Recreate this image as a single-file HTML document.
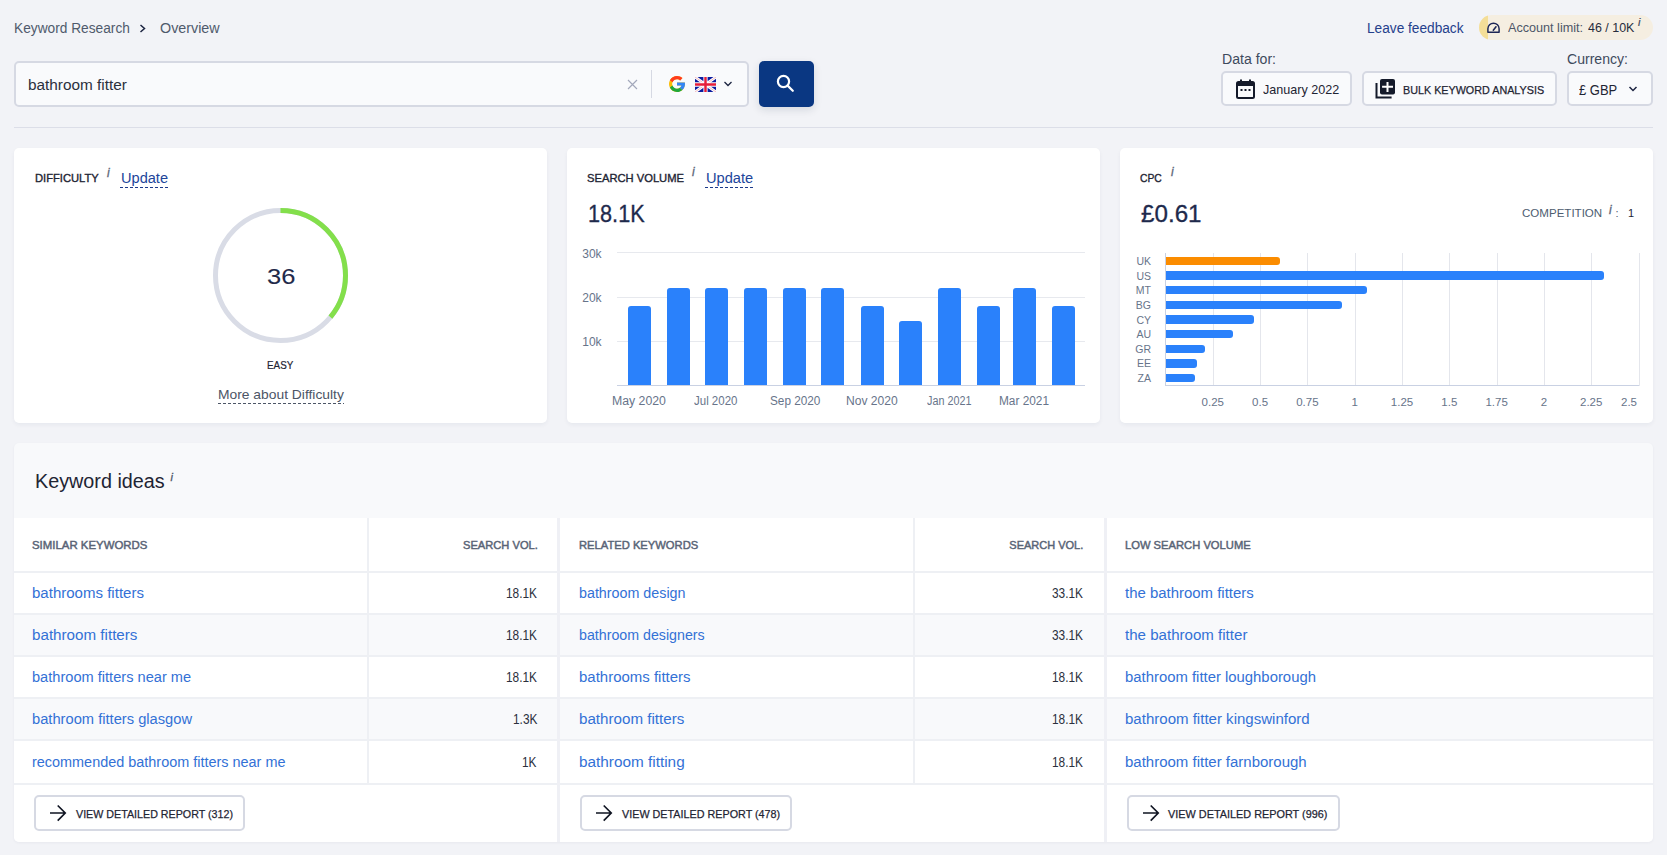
<!DOCTYPE html>
<html><head><meta charset="utf-8"><style>
*{margin:0;padding:0;box-sizing:border-box}
html,body{width:1667px;height:855px;overflow:hidden;background:#f2f3f7;font-family:"Liberation Sans",sans-serif}
.t{position:absolute;white-space:nowrap;line-height:20px;transform-origin:0 50%}
.a{position:absolute}
.card{position:absolute;background:#fff;border-radius:5px;box-shadow:0 2px 4px rgba(20,30,70,.05)}
.btn{position:absolute;border:2px solid #d6d9e3;border-radius:5px;background:#f9fafc}
.wbtn{position:absolute;border:2px solid #d6d9e3;border-radius:5px;background:#fff}
.dash{position:absolute;height:1px;background-image:linear-gradient(to right,currentColor 60%,transparent 60%);background-size:5px 1px}
</style></head>
<body>
<span class="t" style="left:14.40px;top:18.15px;font-size:14px;color:#4f5a6c;transform:scaleX(0.9797);">Keyword Research</span>
<svg class="a" style="left:139px;top:24px" width="8" height="9" viewBox="0 0 8 9"><path d="M1.5 1 L5.5 4.5 L1.5 8" fill="none" stroke="#1b2340" stroke-width="1.5"/></svg>
<span class="t" style="left:159.80px;top:18.15px;font-size:14px;color:#4f5a6c;transform:scaleX(1.0226);">Overview</span>
<div class="a" style="left:14px;top:61px;width:735px;height:46px;border:2px solid #d6d9e3;border-radius:5px;background:#f9fafc"></div>
<span class="t" style="left:28.40px;top:75.15px;font-size:14px;color:#2b303d;transform:scaleX(1.0961);">bathroom fitter</span>
<svg class="a" style="left:627px;top:79px" width="11" height="11" viewBox="0 0 11 11"><path d="M1 1L10 10M10 1L1 10" stroke="#a3a8bb" stroke-width="1.15"/></svg>
<div class="a" style="left:651px;top:70px;width:1px;height:28px;background:#d6d9e3"></div>
<svg class="a" style="left:669px;top:76px" width="16" height="16" viewBox="4 4 40 40">
<path fill="#FBBC05" d="M43.6 20.1H42V20H24v8h11.3C33.7 32.7 29.2 36 24 36c-6.6 0-12-5.4-12-12s5.4-12 12-12c3.1 0 5.8 1.2 7.9 3l5.7-5.7C34 6.1 29.3 4 24 4 13 4 4 13 4 24s9 20 20 20 20-9 20-20c0-1.3-.1-2.6-.4-3.9z"/>
<path fill="#FF3B1F" d="M6.3 14.7l6.6 4.8C14.7 15.1 19 12 24 12c3.1 0 5.8 1.2 7.9 3l5.7-5.7C34 6.1 29.3 4 24 4 16.3 4 9.7 8.3 6.3 14.7z"/>
<path fill="#1FA83C" d="M24 44c5.2 0 9.9-2 13.4-5.2l-6.2-5.2C29.2 35.1 26.7 36 24 36c-5.2 0-9.6-3.3-11.3-8l-6.5 5C9.5 39.6 16.2 44 24 44z"/>
<path fill="#3386F6" d="M43.6 20.1H42V20H24v8h11.3c-.8 2.2-2.2 4.2-4.1 5.6l6.2 5.2C37 39.2 44 34 44 24c0-1.3-.1-2.6-.4-3.9z"/>
</svg>
<svg class="a" style="left:695px;top:77px" width="21" height="15" viewBox="0 0 60 40" preserveAspectRatio="none">
<rect width="60" height="40" fill="#0b1b9f"/>
<path d="M0 0L60 40M60 0L0 40" stroke="#fff" stroke-width="8"/>
<path d="M0 0L60 40M60 0L0 40" stroke="#f0a0a8" stroke-width="2"/>
<path d="M30 0V40M0 20H60" stroke="#fff" stroke-width="12"/>
<path d="M30 0V40M0 20H60" stroke="#e51d3a" stroke-width="7"/>
</svg>
<svg class="a" style="left:723px;top:80px" width="10" height="8" viewBox="0 0 10 8"><path d="M1.5 2 L5 5.5 L8.5 2" fill="none" stroke="#1b2340" stroke-width="1.3"/></svg>
<div class="a" style="left:759px;top:61px;width:55px;height:46px;border-radius:5px;background:#0a3782;box-shadow:0 3px 8px rgba(20,30,60,.12)"></div>
<svg class="a" style="left:774px;top:72px" width="24" height="24" viewBox="0 0 24 24"><circle cx="9.5" cy="9.5" r="5.6" fill="none" stroke="#fff" stroke-width="2.2"/><path d="M13.6 13.6L18.8 18.8" stroke="#fff" stroke-width="2.2" stroke-linecap="round"/></svg>
<span class="t" style="left:1367.40px;top:18.15px;font-size:14px;color:#25408c;transform:scaleX(0.9766);">Leave feedback</span>
<div class="a" style="left:1479px;top:15px;width:174px;height:25px;border-radius:13px;background:#f5eee1;overflow:hidden"><div class="a" style="left:0;top:0;width:9px;height:25px;background:#f4de98"></div></div>
<svg class="a" style="left:1486px;top:22px" width="15" height="12" viewBox="0 0 15 12"><path d="M1.9 10.2V6.8A5.6 5.6 0 0 1 13.1 6.8V10.2Z" fill="none" stroke="#1d2757" stroke-width="1.5" stroke-linejoin="round"/><path d="M7.3 8.2L10 4.8" stroke="#1d2757" stroke-width="1.6" stroke-linecap="round"/></svg>
<span class="t" style="left:1508.00px;top:17.67px;font-size:12.5px;color:#4d5668;transform:scaleX(1.0093);">Account limit:</span>
<span class="t" style="left:1588.00px;top:17.67px;font-size:12.5px;color:#272d3d;transform:scaleX(0.9965);">46 / 10K</span>
<span class="t" style="left:1638.00px;top:11.79px;font-size:11px;color:#3b4458;font-style:italic;-webkit-text-stroke:0.2px currentColor;">i</span>
<span class="t" style="left:1222.40px;top:49.15px;font-size:14px;color:#3e4a5d;transform:scaleX(1.0058);">Data for:</span>
<div class="btn" style="left:1221px;top:71px;width:131px;height:35px"></div>
<svg class="a" style="left:1236px;top:79px" width="19" height="20" viewBox="0 0 19 20">
<rect x="1" y="3" width="17" height="16" rx="1.5" fill="none" stroke="#141a2a" stroke-width="2"/>
<rect x="1" y="3" width="17" height="4" fill="#141a2a"/>
<path d="M5 0.5V4M14 0.5V4" stroke="#141a2a" stroke-width="2"/>
<rect x="4.5" y="10" width="2" height="2" fill="#141a2a"/><rect x="8.5" y="10" width="2" height="2" fill="#141a2a"/><rect x="12.5" y="10" width="2" height="2" fill="#141a2a"/>
</svg>
<span class="t" style="left:1263.00px;top:79.62px;font-size:13.5px;color:#1e2433;transform:scaleX(0.9314);">January 2022</span>
<div class="btn" style="left:1362px;top:71px;width:195px;height:35px"></div>
<svg class="a" style="left:1375px;top:78px" width="22" height="22" viewBox="0 0 22 22">
<path d="M1.5 5V19.6H16.6" fill="none" stroke="#141a2a" stroke-width="2"/>
<rect x="5" y="1" width="15" height="15.6" rx="2" fill="#141a2a"/>
<path d="M12.5 3.9V13.9M7.1 8.8H18" stroke="#fff" stroke-width="2"/>
</svg>
<span class="t" style="left:1403.30px;top:80.01px;font-size:11.5px;color:#1e2433;transform:scaleX(0.9370);-webkit-text-stroke:0.25px currentColor;">BULK KEYWORD ANALYSIS</span>
<span class="t" style="left:1567.40px;top:49.15px;font-size:14px;color:#3e4a5d;transform:scaleX(1.0035);">Currency:</span>
<div class="btn" style="left:1567px;top:71px;width:86px;height:35px"></div>
<span class="t" style="left:1579.20px;top:80.35px;font-size:14px;color:#1e2433;transform:scaleX(0.9265);">£ GBP</span>
<svg class="a" style="left:1628px;top:85px" width="10" height="8" viewBox="0 0 10 8"><path d="M1.5 2 L5 5.5 L8.5 2" fill="none" stroke="#1b2340" stroke-width="1.5"/></svg>
<div class="a" style="left:14px;top:127px;width:1639px;height:1px;background:#dcdee8"></div>
<div class="card" style="left:14px;top:148px;width:533px;height:275px"></div>
<div class="card" style="left:567px;top:148px;width:533px;height:275px"></div>
<div class="card" style="left:1120px;top:148px;width:533px;height:275px"></div>
<span class="t" style="left:34.60px;top:168.19px;font-size:11px;color:#1e2433;transform:scaleX(1.0167);-webkit-text-stroke:0.35px currentColor;">DIFFICULTY</span>
<span class="t" style="left:107.00px;top:162.64px;font-size:12px;color:#5d6779;font-style:italic;-webkit-text-stroke:0.3px currentColor;">i</span>
<span class="t" style="left:121.00px;top:167.55px;font-size:14px;color:#21459a;transform:scaleX(1.0410);">Update</span>
<div class="dash" style="left:120px;top:187px;width:48px;color:#1c3a8a"></div>
<svg class="a" style="left:0;top:0" width="560" height="430"><circle cx="280.5" cy="275.5" r="65" fill="none" stroke="#d9dce6" stroke-width="5"/>
<circle cx="280.5" cy="275.5" r="65" fill="none" stroke="#83df4b" stroke-width="5" stroke-dasharray="147.03 408.41" transform="rotate(-90 280.5 275.5)"/></svg>
<span class="t" style="left:266.70px;top:266.50px;font-size:22.5px;color:#1f2a4a;transform:scaleX(1.1331);-webkit-text-stroke:0.1px currentColor;">36</span>
<span class="t" style="left:266.70px;top:355.19px;font-size:11px;color:#1e2433;transform:scaleX(0.8955);-webkit-text-stroke:0.2px currentColor;">EASY</span>
<span class="t" style="left:217.60px;top:385.49px;font-size:13px;color:#4c5566;transform:scaleX(1.0640);">More about Difficulty</span>
<div class="dash" style="left:218px;top:403px;width:126px;color:#4c5566"></div>
<span class="t" style="left:587.00px;top:168.19px;font-size:11px;color:#1e2433;transform:scaleX(1.0171);-webkit-text-stroke:0.35px currentColor;">SEARCH VOLUME</span>
<span class="t" style="left:692.00px;top:162.04px;font-size:12px;color:#5d6779;font-style:italic;-webkit-text-stroke:0.3px currentColor;">i</span>
<span class="t" style="left:706.00px;top:167.55px;font-size:14px;color:#21459a;transform:scaleX(1.0454);">Update</span>
<div class="dash" style="left:705px;top:187px;width:48px;color:#1c3a8a"></div>
<span class="t" style="left:587.60px;top:203.65px;font-size:23.5px;color:#1e2a4c;transform:scaleX(0.9227);-webkit-text-stroke:0.3px currentColor;">18.1K</span>
<div class="a" style="left:617px;top:252px;width:468px;height:1px;background:#e7e9ee"></div>
<div class="a" style="left:617px;top:297px;width:468px;height:1px;background:#e7e9ee"></div>
<div class="a" style="left:617px;top:341px;width:468px;height:1px;background:#e7e9ee"></div>
<div class="a" style="left:617px;top:385px;width:468px;height:1px;background:#c9d1e3"></div>
<span class="t" style="left:582.22px;top:244.24px;font-size:12px;color:#67748a;">30k</span>
<span class="t" style="left:582.22px;top:288.24px;font-size:12px;color:#67748a;">20k</span>
<span class="t" style="left:582.22px;top:332.24px;font-size:12px;color:#67748a;">10k</span>
<div class="a" style="left:628.2px;top:306px;width:22.8px;height:79.0px;background:#2a81fb;border-radius:3px 3px 0 0"></div>
<div class="a" style="left:667.1px;top:288px;width:22.8px;height:97.0px;background:#2a81fb;border-radius:3px 3px 0 0"></div>
<div class="a" style="left:705.2px;top:288px;width:22.8px;height:97.0px;background:#2a81fb;border-radius:3px 3px 0 0"></div>
<div class="a" style="left:744.0px;top:288px;width:22.8px;height:97.0px;background:#2a81fb;border-radius:3px 3px 0 0"></div>
<div class="a" style="left:783.1px;top:288px;width:22.8px;height:97.0px;background:#2a81fb;border-radius:3px 3px 0 0"></div>
<div class="a" style="left:821.1px;top:288px;width:22.8px;height:97.0px;background:#2a81fb;border-radius:3px 3px 0 0"></div>
<div class="a" style="left:861.2px;top:306px;width:22.8px;height:79.0px;background:#2a81fb;border-radius:3px 3px 0 0"></div>
<div class="a" style="left:899.1px;top:321.3px;width:22.8px;height:63.7px;background:#2a81fb;border-radius:3px 3px 0 0"></div>
<div class="a" style="left:938.0px;top:288px;width:22.8px;height:97.0px;background:#2a81fb;border-radius:3px 3px 0 0"></div>
<div class="a" style="left:977.2px;top:306px;width:22.8px;height:79.0px;background:#2a81fb;border-radius:3px 3px 0 0"></div>
<div class="a" style="left:1013.2px;top:288px;width:22.8px;height:97.0px;background:#2a81fb;border-radius:3px 3px 0 0"></div>
<div class="a" style="left:1052.0px;top:306px;width:22.8px;height:79.0px;background:#2a81fb;border-radius:3px 3px 0 0"></div>
<span class="t" style="left:611.80px;top:390.64px;font-size:12px;color:#67748a;transform:scaleX(1.0232);">May 2020</span>
<span class="t" style="left:694.30px;top:390.64px;font-size:12px;color:#67748a;transform:scaleX(0.9568);">Jul 2020</span>
<span class="t" style="left:769.50px;top:390.64px;font-size:12px;color:#67748a;transform:scaleX(0.9813);">Sep 2020</span>
<span class="t" style="left:846.00px;top:390.64px;font-size:12px;color:#67748a;transform:scaleX(1.0066);">Nov 2020</span>
<span class="t" style="left:926.80px;top:390.64px;font-size:12px;color:#67748a;transform:scaleX(0.8991);">Jan 2021</span>
<span class="t" style="left:999.00px;top:390.64px;font-size:12px;color:#67748a;transform:scaleX(0.9862);">Mar 2021</span>
<span class="t" style="left:1140.40px;top:168.19px;font-size:11px;color:#1e2433;transform:scaleX(0.9393);-webkit-text-stroke:0.35px currentColor;">CPC</span>
<span class="t" style="left:1171.00px;top:161.84px;font-size:12px;color:#5d6779;font-style:italic;-webkit-text-stroke:0.3px currentColor;">i</span>
<span class="t" style="left:1141.20px;top:203.65px;font-size:23.5px;color:#1e2a4c;transform:scaleX(1.0294);-webkit-text-stroke:0.3px currentColor;">£0.61</span>
<span class="t" style="left:1522.00px;top:203.09px;font-size:11px;color:#4d5d70;transform:scaleX(1.0498);">COMPETITION</span>
<span class="t" style="left:1609.00px;top:199.54px;font-size:12px;color:#5d6779;font-style:italic;-webkit-text-stroke:0.3px currentColor;">i</span>
<span class="t" style="left:1615.50px;top:203.19px;font-size:11px;color:#4d5d70;">:</span>
<span class="t" style="left:1628.00px;top:203.19px;font-size:11px;color:#1e2433;">1</span>
<div class="a" style="left:1212.8px;top:253px;width:1px;height:133px;background:#e4e6ec"></div>
<div class="a" style="left:1260.1px;top:253px;width:1px;height:133px;background:#e4e6ec"></div>
<div class="a" style="left:1307.4px;top:253px;width:1px;height:133px;background:#e4e6ec"></div>
<div class="a" style="left:1354.7px;top:253px;width:1px;height:133px;background:#e4e6ec"></div>
<div class="a" style="left:1402.0px;top:253px;width:1px;height:133px;background:#e4e6ec"></div>
<div class="a" style="left:1449.3px;top:253px;width:1px;height:133px;background:#e4e6ec"></div>
<div class="a" style="left:1496.6px;top:253px;width:1px;height:133px;background:#e4e6ec"></div>
<div class="a" style="left:1543.9px;top:253px;width:1px;height:133px;background:#e4e6ec"></div>
<div class="a" style="left:1591.2px;top:253px;width:1px;height:133px;background:#e4e6ec"></div>
<div class="a" style="left:1638.5px;top:253px;width:1px;height:133px;background:#e4e6ec"></div>
<div class="a" style="left:1165px;top:253px;width:1px;height:133px;background:#c9d1e3"></div>
<div class="a" style="left:1165px;top:385px;width:474px;height:1px;background:#c9d1e3"></div>
<div class="a" style="left:1166px;top:256.5px;width:114.0px;height:8.5px;background:#fb8c00;border-radius:0 3px 3px 0"></div>
<span class="t" style="left:1136.40px;top:250.86px;font-size:10.5px;color:#67748a;">UK</span>
<div class="a" style="left:1166px;top:271.2px;width:438.4px;height:8.5px;background:#2a81fb;border-radius:0 3px 3px 0"></div>
<span class="t" style="left:1136.40px;top:265.52px;font-size:10.5px;color:#67748a;">US</span>
<div class="a" style="left:1166px;top:285.8px;width:200.8px;height:8.5px;background:#2a81fb;border-radius:0 3px 3px 0"></div>
<span class="t" style="left:1135.83px;top:280.18px;font-size:10.5px;color:#67748a;">MT</span>
<div class="a" style="left:1166px;top:300.5px;width:175.5px;height:8.5px;background:#2a81fb;border-radius:0 3px 3px 0"></div>
<span class="t" style="left:1135.83px;top:294.84px;font-size:10.5px;color:#67748a;">BG</span>
<div class="a" style="left:1166px;top:315.1px;width:87.9px;height:8.5px;background:#2a81fb;border-radius:0 3px 3px 0"></div>
<span class="t" style="left:1136.40px;top:309.50px;font-size:10.5px;color:#67748a;">CY</span>
<div class="a" style="left:1166px;top:329.8px;width:67.0px;height:8.5px;background:#2a81fb;border-radius:0 3px 3px 0"></div>
<span class="t" style="left:1136.40px;top:324.16px;font-size:10.5px;color:#67748a;">AU</span>
<div class="a" style="left:1166px;top:344.5px;width:38.9px;height:8.5px;background:#2a81fb;border-radius:0 3px 3px 0"></div>
<span class="t" style="left:1135.25px;top:338.82px;font-size:10.5px;color:#67748a;">GR</span>
<div class="a" style="left:1166px;top:359.1px;width:31.1px;height:8.5px;background:#2a81fb;border-radius:0 3px 3px 0"></div>
<span class="t" style="left:1136.98px;top:353.48px;font-size:10.5px;color:#67748a;">EE</span>
<div class="a" style="left:1166px;top:373.8px;width:29.0px;height:8.5px;background:#2a81fb;border-radius:0 3px 3px 0"></div>
<span class="t" style="left:1137.56px;top:368.14px;font-size:10.5px;color:#67748a;">ZA</span>
<span class="t" style="left:1201.62px;top:391.61px;font-size:11.5px;color:#67748a;">0.25</span>
<span class="t" style="left:1252.11px;top:391.61px;font-size:11.5px;color:#67748a;">0.5</span>
<span class="t" style="left:1296.22px;top:391.61px;font-size:11.5px;color:#67748a;">0.75</span>
<span class="t" style="left:1351.51px;top:391.61px;font-size:11.5px;color:#67748a;">1</span>
<span class="t" style="left:1390.82px;top:391.61px;font-size:11.5px;color:#67748a;">1.25</span>
<span class="t" style="left:1441.31px;top:391.61px;font-size:11.5px;color:#67748a;">1.5</span>
<span class="t" style="left:1485.42px;top:391.61px;font-size:11.5px;color:#67748a;">1.75</span>
<span class="t" style="left:1540.71px;top:391.61px;font-size:11.5px;color:#67748a;">2</span>
<span class="t" style="left:1580.02px;top:391.61px;font-size:11.5px;color:#67748a;">2.25</span>
<span class="t" style="left:1621.02px;top:391.61px;font-size:11.5px;color:#67748a;">2.5</span>
<div class="a" style="left:14px;top:443px;width:1639px;height:399px;background:#f8f9fb;border-radius:5px;box-shadow:0 1px 3px rgba(30,40,70,.05)"></div>
<span class="t" style="left:34.80px;top:470.97px;font-size:20px;color:#1e2433;transform:scaleX(0.9886);">Keyword ideas</span>
<span class="t" style="left:170.50px;top:466.99px;font-size:11px;color:#4d5769;font-style:italic;-webkit-text-stroke:0.3px currentColor;">i</span>
<div class="a" style="left:14px;top:518px;width:1639px;height:324px;background:#fff;border-radius:0 0 5px 5px"></div>
<div class="a" style="left:14px;top:615px;width:1639px;height:40px;background:#f8f9fb"></div>
<div class="a" style="left:14px;top:699px;width:1639px;height:40px;background:#f8f9fb"></div>
<div class="a" style="left:14px;top:571px;width:1639px;height:2px;background:#eef0f4"></div>
<div class="a" style="left:14px;top:613px;width:1639px;height:2px;background:#eef0f4"></div>
<div class="a" style="left:14px;top:655px;width:1639px;height:2px;background:#eef0f4"></div>
<div class="a" style="left:14px;top:697px;width:1639px;height:2px;background:#eef0f4"></div>
<div class="a" style="left:14px;top:739px;width:1639px;height:2px;background:#eef0f4"></div>
<div class="a" style="left:14px;top:783px;width:1639px;height:2px;background:#eef0f4"></div>
<div class="a" style="left:367px;top:518px;width:2px;height:265px;background:#eef0f4"></div>
<div class="a" style="left:913px;top:518px;width:2px;height:265px;background:#eef0f4"></div>
<div class="a" style="left:557px;top:518px;width:3px;height:324px;background:#eff0f5"></div>
<div class="a" style="left:1104px;top:518px;width:3px;height:324px;background:#eff0f5"></div>
<span class="t" style="left:32.20px;top:534.99px;font-size:11px;color:#596476;transform:scaleX(1.0372);-webkit-text-stroke:0.45px currentColor;">SIMILAR KEYWORDS</span>
<span class="t" style="left:462.50px;top:534.99px;font-size:11px;color:#596476;transform:scaleX(1.0125);-webkit-text-stroke:0.45px currentColor;">SEARCH VOL.</span>
<span class="t" style="left:578.60px;top:534.99px;font-size:11px;color:#596476;transform:scaleX(1.0175);-webkit-text-stroke:0.45px currentColor;">RELATED KEYWORDS</span>
<span class="t" style="left:1009.30px;top:534.99px;font-size:11px;color:#596476;-webkit-text-stroke:0.45px currentColor;">SEARCH VOL.</span>
<span class="t" style="left:1125.30px;top:534.99px;font-size:11px;color:#596476;transform:scaleX(1.0180);-webkit-text-stroke:0.45px currentColor;">LOW SEARCH VOLUME</span>
<span class="t" style="left:32.30px;top:583.35px;font-size:14px;color:#3371d6;transform:scaleX(1.0736);">bathrooms fitters</span>
<span class="t" style="left:505.90px;top:583.35px;font-size:14px;color:#2b303d;transform:scaleX(0.8468);">18.1K</span>
<span class="t" style="left:32.30px;top:625.35px;font-size:14px;color:#3371d6;transform:scaleX(1.0840);">bathroom fitters</span>
<span class="t" style="left:505.90px;top:625.35px;font-size:14px;color:#2b303d;transform:scaleX(0.8468);">18.1K</span>
<span class="t" style="left:32.30px;top:667.35px;font-size:14px;color:#3371d6;transform:scaleX(1.0431);">bathroom fitters near me</span>
<span class="t" style="left:505.90px;top:667.35px;font-size:14px;color:#2b303d;transform:scaleX(0.8468);">18.1K</span>
<span class="t" style="left:32.30px;top:709.35px;font-size:14px;color:#3371d6;transform:scaleX(1.0496);">bathroom fitters glasgow</span>
<span class="t" style="left:512.54px;top:709.35px;font-size:14px;color:#2b303d;transform:scaleX(0.8468);">1.3K</span>
<span class="t" style="left:32.30px;top:751.55px;font-size:14px;color:#3371d6;transform:scaleX(1.0309);">recommended bathroom fitters near me</span>
<span class="t" style="left:522.38px;top:751.55px;font-size:14px;color:#2b303d;transform:scaleX(0.8468);">1K</span>
<span class="t" style="left:578.80px;top:583.35px;font-size:14px;color:#3371d6;transform:scaleX(1.0211);">bathroom design</span>
<span class="t" style="left:1052.00px;top:583.35px;font-size:14px;color:#2b303d;transform:scaleX(0.8468);">33.1K</span>
<span class="t" style="left:578.80px;top:625.35px;font-size:14px;color:#3371d6;transform:scaleX(1.0157);">bathroom designers</span>
<span class="t" style="left:1052.00px;top:625.35px;font-size:14px;color:#2b303d;transform:scaleX(0.8468);">33.1K</span>
<span class="t" style="left:578.80px;top:667.35px;font-size:14px;color:#3371d6;transform:scaleX(1.0697);">bathrooms fitters</span>
<span class="t" style="left:1052.00px;top:667.35px;font-size:14px;color:#2b303d;transform:scaleX(0.8468);">18.1K</span>
<span class="t" style="left:578.80px;top:709.35px;font-size:14px;color:#3371d6;transform:scaleX(1.0830);">bathroom fitters</span>
<span class="t" style="left:1052.00px;top:709.35px;font-size:14px;color:#2b303d;transform:scaleX(0.8468);">18.1K</span>
<span class="t" style="left:578.80px;top:751.55px;font-size:14px;color:#3371d6;transform:scaleX(1.0950);">bathroom fitting</span>
<span class="t" style="left:1052.00px;top:751.55px;font-size:14px;color:#2b303d;transform:scaleX(0.8468);">18.1K</span>
<span class="t" style="left:1125.30px;top:583.35px;font-size:14px;color:#3371d6;transform:scaleX(1.0671);">the bathroom fitters</span>
<span class="t" style="left:1125.30px;top:625.35px;font-size:14px;color:#3371d6;transform:scaleX(1.0774);">the bathroom fitter</span>
<span class="t" style="left:1125.30px;top:667.35px;font-size:14px;color:#3371d6;transform:scaleX(1.0620);">bathroom fitter loughborough</span>
<span class="t" style="left:1125.30px;top:709.35px;font-size:14px;color:#3371d6;transform:scaleX(1.0739);">bathroom fitter kingswinford</span>
<span class="t" style="left:1125.30px;top:751.55px;font-size:14px;color:#3371d6;transform:scaleX(1.0708);">bathroom fitter farnborough</span>
<div class="wbtn" style="left:34px;top:795px;width:211px;height:36px"></div>
<svg class="a" style="left:49px;top:804px" width="18" height="18" viewBox="0 0 18 18"><path d="M1 9H16.2M8.7 1.5L16.2 9L8.7 16.6" fill="none" stroke="#0f1422" stroke-width="1.7"/></svg>
<span class="t" style="left:75.60px;top:804.21px;font-size:11.5px;color:#1e2433;transform:scaleX(0.9306);-webkit-text-stroke:0.25px currentColor;">VIEW DETAILED REPORT (312)</span>
<div class="wbtn" style="left:580px;top:795px;width:212px;height:36px"></div>
<svg class="a" style="left:595px;top:804px" width="18" height="18" viewBox="0 0 18 18"><path d="M1 9H16.2M8.7 1.5L16.2 9L8.7 16.6" fill="none" stroke="#0f1422" stroke-width="1.7"/></svg>
<span class="t" style="left:621.80px;top:804.21px;font-size:11.5px;color:#1e2433;transform:scaleX(0.9377);-webkit-text-stroke:0.25px currentColor;">VIEW DETAILED REPORT (478)</span>
<div class="wbtn" style="left:1127px;top:795px;width:213px;height:36px"></div>
<svg class="a" style="left:1142px;top:804px" width="18" height="18" viewBox="0 0 18 18"><path d="M1 9H16.2M8.7 1.5L16.2 9L8.7 16.6" fill="none" stroke="#0f1422" stroke-width="1.7"/></svg>
<span class="t" style="left:1168.00px;top:804.21px;font-size:11.5px;color:#1e2433;transform:scaleX(0.9448);-webkit-text-stroke:0.25px currentColor;">VIEW DETAILED REPORT (996)</span>
</body></html>
